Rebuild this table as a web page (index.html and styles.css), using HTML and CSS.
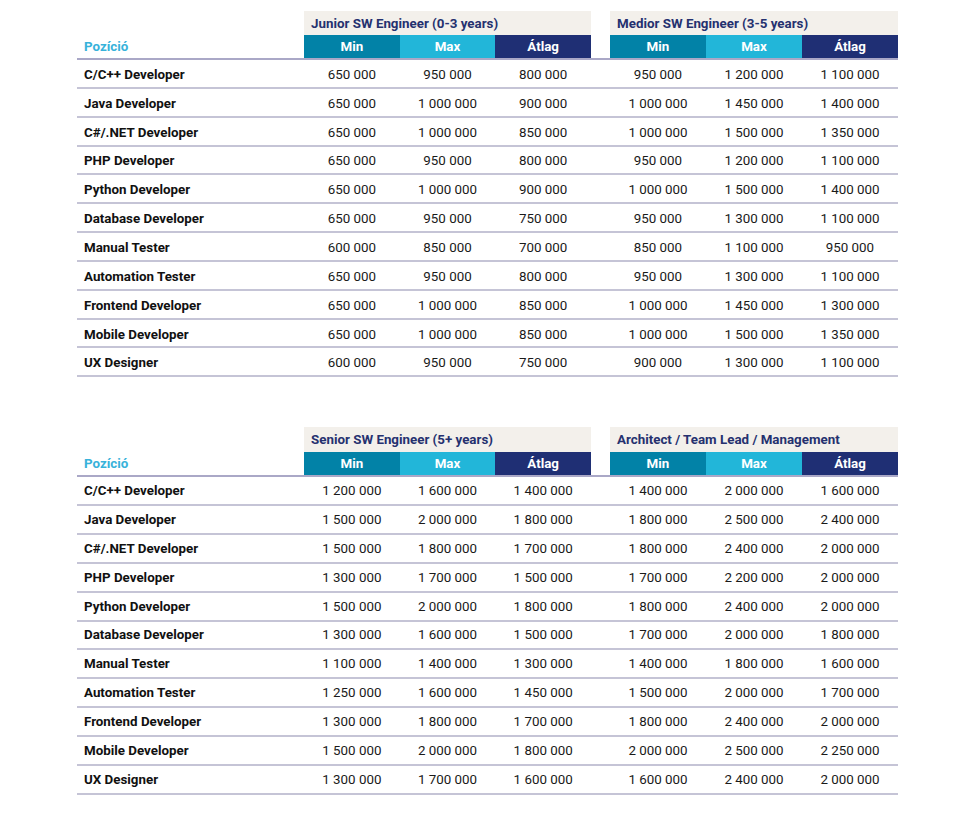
FILE: index.html
```html
<!DOCTYPE html>
<html lang="hu">
<head>
<meta charset="utf-8">
<link rel="stylesheet" href="styles.css">
</head>
<body>
<div class="page">
  <div class="table t1">
    <div class="row titles">
      <div class="pos"></div>
      <div class="group">Junior SW Engineer (0-3 years)</div>
      <div class="gap"></div>
      <div class="group">Medior SW Engineer (3-5 years)</div>
    </div>
    <div class="row head">
      <div class="pos label">Pozíció</div>
      <div class="h min">Min</div><div class="h max">Max</div><div class="h avg">Átlag</div>
      <div class="gap"></div>
      <div class="h min">Min</div><div class="h max">Max</div><div class="h avg">Átlag</div>
    </div>
    <div class="row data"><div class="pos">C/C++ Developer</div><div>650 000</div><div>950 000</div><div>800 000</div><div class="gap"></div><div>950 000</div><div>1 200 000</div><div>1 100 000</div></div>
    <div class="row data"><div class="pos">Java Developer</div><div>650 000</div><div>1 000 000</div><div>900 000</div><div class="gap"></div><div>1 000 000</div><div>1 450 000</div><div>1 400 000</div></div>
    <div class="row data"><div class="pos">C#/.NET Developer</div><div>650 000</div><div>1 000 000</div><div>850 000</div><div class="gap"></div><div>1 000 000</div><div>1 500 000</div><div>1 350 000</div></div>
    <div class="row data"><div class="pos">PHP Developer</div><div>650 000</div><div>950 000</div><div>800 000</div><div class="gap"></div><div>950 000</div><div>1 200 000</div><div>1 100 000</div></div>
    <div class="row data"><div class="pos">Python Developer</div><div>650 000</div><div>1 000 000</div><div>900 000</div><div class="gap"></div><div>1 000 000</div><div>1 500 000</div><div>1 400 000</div></div>
    <div class="row data"><div class="pos">Database Developer</div><div>650 000</div><div>950 000</div><div>750 000</div><div class="gap"></div><div>950 000</div><div>1 300 000</div><div>1 100 000</div></div>
    <div class="row data"><div class="pos">Manual Tester</div><div>600 000</div><div>850 000</div><div>700 000</div><div class="gap"></div><div>850 000</div><div>1 100 000</div><div>950 000</div></div>
    <div class="row data"><div class="pos">Automation Tester</div><div>650 000</div><div>950 000</div><div>800 000</div><div class="gap"></div><div>950 000</div><div>1 300 000</div><div>1 100 000</div></div>
    <div class="row data"><div class="pos">Frontend Developer</div><div>650 000</div><div>1 000 000</div><div>850 000</div><div class="gap"></div><div>1 000 000</div><div>1 450 000</div><div>1 300 000</div></div>
    <div class="row data"><div class="pos">Mobile Developer</div><div>650 000</div><div>1 000 000</div><div>850 000</div><div class="gap"></div><div>1 000 000</div><div>1 500 000</div><div>1 350 000</div></div>
    <div class="row data"><div class="pos">UX Designer</div><div>600 000</div><div>950 000</div><div>750 000</div><div class="gap"></div><div>900 000</div><div>1 300 000</div><div>1 100 000</div></div>
  </div>

  <div class="table t2">
    <div class="row titles">
      <div class="pos"></div>
      <div class="group">Senior SW Engineer (5+ years)</div>
      <div class="gap"></div>
      <div class="group">Architect / Team Lead / Management</div>
    </div>
    <div class="row head">
      <div class="pos label">Pozíció</div>
      <div class="h min">Min</div><div class="h max">Max</div><div class="h avg">Átlag</div>
      <div class="gap"></div>
      <div class="h min">Min</div><div class="h max">Max</div><div class="h avg">Átlag</div>
    </div>
    <div class="row data"><div class="pos">C/C++ Developer</div><div>1 200 000</div><div>1 600 000</div><div>1 400 000</div><div class="gap"></div><div>1 400 000</div><div>2 000 000</div><div>1 600 000</div></div>
    <div class="row data"><div class="pos">Java Developer</div><div>1 500 000</div><div>2 000 000</div><div>1 800 000</div><div class="gap"></div><div>1 800 000</div><div>2 500 000</div><div>2 400 000</div></div>
    <div class="row data"><div class="pos">C#/.NET Developer</div><div>1 500 000</div><div>1 800 000</div><div>1 700 000</div><div class="gap"></div><div>1 800 000</div><div>2 400 000</div><div>2 000 000</div></div>
    <div class="row data"><div class="pos">PHP Developer</div><div>1 300 000</div><div>1 700 000</div><div>1 500 000</div><div class="gap"></div><div>1 700 000</div><div>2 200 000</div><div>2 000 000</div></div>
    <div class="row data"><div class="pos">Python Developer</div><div>1 500 000</div><div>2 000 000</div><div>1 800 000</div><div class="gap"></div><div>1 800 000</div><div>2 400 000</div><div>2 000 000</div></div>
    <div class="row data"><div class="pos">Database Developer</div><div>1 300 000</div><div>1 600 000</div><div>1 500 000</div><div class="gap"></div><div>1 700 000</div><div>2 000 000</div><div>1 800 000</div></div>
    <div class="row data"><div class="pos">Manual Tester</div><div>1 100 000</div><div>1 400 000</div><div>1 300 000</div><div class="gap"></div><div>1 400 000</div><div>1 800 000</div><div>1 600 000</div></div>
    <div class="row data"><div class="pos">Automation Tester</div><div>1 250 000</div><div>1 600 000</div><div>1 450 000</div><div class="gap"></div><div>1 500 000</div><div>2 000 000</div><div>1 700 000</div></div>
    <div class="row data"><div class="pos">Frontend Developer</div><div>1 300 000</div><div>1 800 000</div><div>1 700 000</div><div class="gap"></div><div>1 800 000</div><div>2 400 000</div><div>2 000 000</div></div>
    <div class="row data"><div class="pos">Mobile Developer</div><div>1 500 000</div><div>2 000 000</div><div>1 800 000</div><div class="gap"></div><div>2 000 000</div><div>2 500 000</div><div>2 250 000</div></div>
    <div class="row data"><div class="pos">UX Designer</div><div>1 300 000</div><div>1 700 000</div><div>1 600 000</div><div class="gap"></div><div>1 600 000</div><div>2 400 000</div><div>2 000 000</div></div>
  </div>
</div>
</body>
</html>
```

FILE: styles.css
```css
* { box-sizing: border-box; }
html, body { margin: 0; padding: 0; background: #ffffff; }
body {
  font-family: Roboto, "Liberation Sans", Arial, sans-serif;
  font-size: 13.35px;
  color: #1a1a1a;
}
.page {
  padding: 11px 0 0 77px;
  width: 898px;
  display: flex;
  flex-direction: column;
  gap: 50px;
}
.table { display: flex; flex-direction: column; width: 821px; }
.row {
  display: grid;
  grid-template-columns: 227px 95.67px 95.67px 95.66px 19px 96px 96px 96px;
  align-items: center;
}
.titles {
  grid-template-columns: 227px 287px 19px 288px;
  height: 24px;
}
.t2 .titles { height: 25px; }
.group {
  background: #f3f0eb;
  height: 100%;
  display: flex;
  align-items: center;
  padding-left: 7px;
  font-weight: 700;
  color: #25316f;
}
.head {
  height: 25px;
  border-bottom: 2px solid #aaa8c7;
  align-items: stretch;
}
.head .h {
  display: flex;
  align-items: center;
  justify-content: center;
  color: #ffffff;
  font-weight: 700;
  height: 23px;
}
.head .min { background: #0282a7; }
.head .max { background: #22b6d9; }
.head .avg { background: #1f2f74; }
.head .label {
  display: flex;
  align-items: center;
  padding-left: 7px;
  color: #37b2da;
  font-weight: 700;
}
.data {
  height: 28.85px;
  border-bottom: 2px solid #c5c4d6;
  padding-top: 2px;
}
.t2 .data { padding-top: 0; }
.data div { text-align: center; }
.data .pos {
  text-align: left;
  padding-left: 7px;
  font-weight: 700;
  color: #111111;
}
```
